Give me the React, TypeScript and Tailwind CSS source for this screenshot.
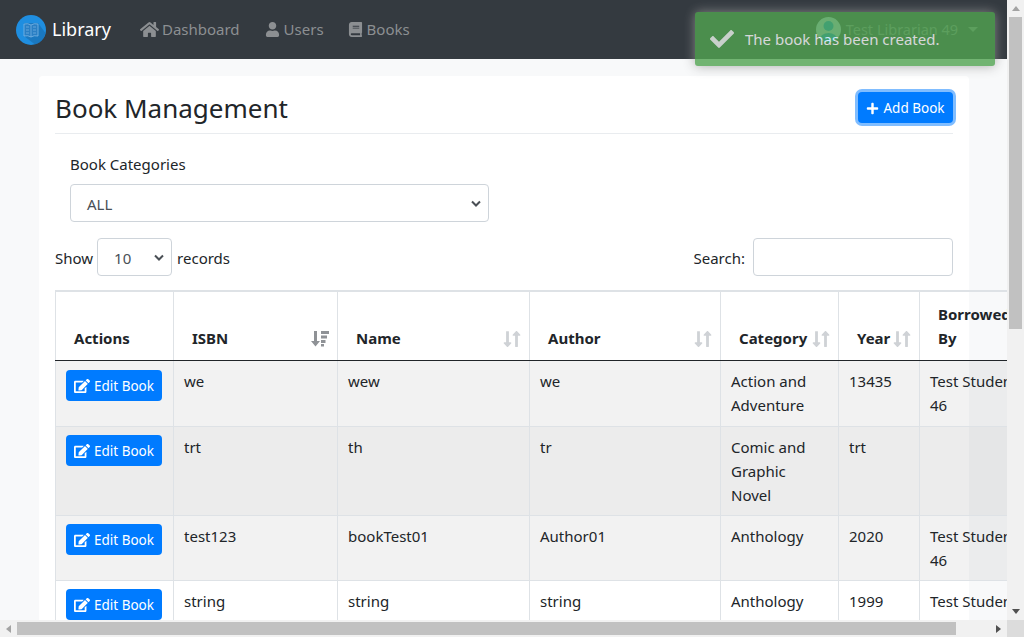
import { FaBook, FaCheck, FaEdit, FaHome, FaLongArrowAltDown, FaLongArrowAltUp, FaPlus, FaUser } from 'react-icons/fa';

const rows = [
  { isbn: 'we', name: 'wew', author: 'we', category: 'Action and Adventure', year: '13435', by: 'Test Student 46', h: 'h-[66px]', bg: 'bg-black/5', btn: 'pt-[9px]' },
  { isbn: 'trt', name: 'th', author: 'tr', category: 'Comic and Graphic Novel', year: 'trt', by: '', h: 'h-[89px]', bg: 'bg-black/[0.075]', btn: 'pt-[8px]' },
  { isbn: 'test123', name: 'bookTest01', author: 'Author01', category: 'Anthology', year: '2020', by: 'Test Student 46', h: 'h-[65px]', bg: 'bg-black/5', btn: 'pt-[8px]' },
  { isbn: 'string', name: 'string', author: 'string', category: 'Anthology', year: '1999', by: 'Test Student 46', h: 'h-[65px]', bg: '', btn: 'pt-[8px]' },
];

function SortIcon() {
  return (
    <span className="flex text-[#cfd2d6]">
      <FaLongArrowAltDown className="h-[18px] w-[9px]" />
      <FaLongArrowAltUp className="h-[18px] w-[9px]" />
    </span>
  );
}

function SortedIcon() {
  return (
    <svg width="18" height="17" viewBox="0 0 18 17" fill="#8f9296">
      <path d="M3 1 H6 V11 H9 L4.5 16.5 L0 11 H3 Z" />
      <rect x="10" y="1" width="8" height="3" />
      <rect x="10" y="5.5" width="6" height="3" />
      <rect x="10" y="10" width="4.5" height="3" />
      <rect x="10" y="14" width="3" height="2.5" />
    </svg>
  );
}

function Head({ label, sort, active }: { label: string; sort?: boolean; active?: boolean }) {
  return (
    <th className="border-x border-b border-[#dee2e6] border-b-[#212529] px-[18px] pb-[10px] align-bottom text-left font-bold">
      <div className="flex items-end justify-between leading-6">
        <span>{label}</span>
        {active && <span className="mb-[3px] -mr-[10px]"><SortedIcon /></span>}
        {sort && <span className="mb-[2px] -mr-[10px]"><SortIcon /></span>}
      </div>
    </th>
  );
}

function Scrollbars() {
  return (
    <>
      <div className="absolute right-0 top-0 flex h-[620px] w-[17px] flex-col items-center bg-[#f1f1f1]">
        <div className="mt-[6px] h-0 w-0 border-x-[4px] border-b-[5px] border-x-transparent border-b-[#a3a3a3]" />
        <div className="mt-[6px] h-[312px] w-[13px] bg-[#c1c1c1]" />
        <div className="mt-auto mb-[6px] h-0 w-0 border-x-[4px] border-t-[5px] border-x-transparent border-t-[#505050]" />
      </div>
      <div className="absolute bottom-0 left-0 flex h-[17px] w-[1024px] items-center bg-[#f1f1f1]">
        <div className="ml-[6px] h-0 w-0 border-y-[4px] border-r-[5px] border-y-transparent border-r-[#a3a3a3]" />
        <div className="ml-[6px] h-[13px] w-[939px] bg-[#c1c1c1]" />
        <div className="ml-[40px] h-0 w-0 border-y-[4px] border-l-[5px] border-y-transparent border-l-[#505050]" />
        <div className="ml-auto h-full w-[17px] bg-[#dcdcdc]" />
      </div>
    </>
  );
}

export default function App() {
  return (
    <div className="relative h-[637px] w-[1024px] overflow-hidden bg-[#f8f9fa] font-['Noto_Sans',sans-serif] text-[15px] text-[#212529]">
      <nav className="flex h-[59px] items-center bg-[#343a40] pl-4 text-[#8c8f92]">
        <div className="flex items-center gap-[6px] text-[18px] text-white">
          <svg width="30" height="30" viewBox="0 0 30 30">
            <circle cx="15" cy="15" r="15" fill="#1f8ee0" />
            <path d="M8 8 L22 8 L29.5 18 A15 15 0 0 1 19 29.5 L8 21 Z" fill="#1769aa" opacity="0.6" />
            <path d="M8 9 Q12 8 15 10 Q18 8 22 9 V21 Q18 20 15 22 Q12 20 8 21 Z" fill="#2a7fc4" stroke="#7db8e6" strokeWidth="0.8" />
            <path d="M15 10 V22 M10 12 H13 M10 15 H13 M10 18 H13 M17 12 H20 M17 15 H20 M17 18 H20" stroke="#7db8e6" strokeWidth="0.7" />
          </svg>
          <span>Library</span>
        </div>
        <div className="ml-[29px] flex items-center gap-[25px]">
          <span className="flex items-center gap-[3px]"><FaHome className="text-[19px]" />Dashboard</span>
          <span className="flex items-center gap-1"><FaUser className="text-[15px]" />Users</span>
          <span className="-ml-[1px] flex items-center gap-1"><FaBook className="text-[15px]" />Books</span>
        </div>
        <div className="ml-[406px] flex items-center gap-[5px] text-[14.5px] text-[#8c8f92]">
          <svg width="25" height="25" viewBox="0 0 25 25">
            <clipPath id="avatar"><circle cx="12.5" cy="12.5" r="12.5" /></clipPath>
            <g clipPath="url(#avatar)">
              <rect width="25" height="25" fill="#d0dcf8" />
              <circle cx="12.5" cy="9" r="5" fill="#0a96f0" />
              <ellipse cx="12.5" cy="23" rx="9" ry="7" fill="#0a96f0" />
            </g>
          </svg>
          <span>Test Librarian 49</span>
          <span className="ml-[5px] h-0 w-0 border-x-[5px] border-t-[5px] border-x-transparent border-t-[#8c8f92]" />
        </div>
      </nav>

      <main className="ml-[39px] mt-[17px] w-[930px] rounded bg-white px-4 pt-[12px] pb-10">
        <div className="flex h-[46px] items-center justify-between border-b border-[#e9ecef] pb-[3px]">
          <h1 className="-mt-[2px] text-[26px] font-normal leading-[42px]">Book Management</h1>
          <button className="-mt-[3px] flex h-[31px] w-[95px] items-center justify-center gap-1 rounded bg-[#007bff] pt-[1px] text-[13.5px] text-white ring-[3px] ring-[#80bdff]">
            <FaPlus className="text-[13px]" />Add Book
          </button>
        </div>

        <div className="ml-[15px] mt-[18px] w-[419px]">
          <label className="block leading-6">Book Categories</label>
          <div className="mt-[8px] flex h-[38px] items-center justify-between rounded border border-[#ced4da] pl-4 pr-[7px] text-[#495057]">
            <span className="pt-[2px]">ALL</span>
            <Chevron />
          </div>
        </div>

        <div className="mt-4 flex items-center justify-between text-[#212529]">
          <div className="flex items-center gap-[4px]">
            <span className="pt-[2px]">Show</span>
            <div className="flex h-[38px] w-[75px] items-center justify-between rounded border border-[#ced4da] pl-4 pr-[7px] text-[#495057]">
              <span className="pt-[2px]">10</span>
              <Chevron />
            </div>
            <span className="pl-[1px] pt-[2px]">records</span>
          </div>
          <div className="flex items-center gap-2">
            <span className="pt-[2px]">Search:</span>
            <div className="h-[38px] w-[200px] rounded border border-[#ced4da]" />
          </div>
        </div>

        <table className="mt-[14px] w-[989px] table-fixed border-t-2 border-[#dee2e6]">
          <colgroup>
            <col className="w-[118px]" />
            <col className="w-[164px]" />
            <col className="w-[192px]" />
            <col className="w-[191px]" />
            <col className="w-[118px]" />
            <col className="w-[81px]" />
            <col className="w-[125px]" />
          </colgroup>
          <thead>
            <tr className="h-[69px]">
              <Head label="Actions" />
              <Head label="ISBN" active />
              <Head label="Name" sort />
              <Head label="Author" sort />
              <Head label="Category" sort />
              <Head label="Year" sort />
              <th className="border-x border-b border-[#dee2e6] border-b-[#212529] px-[18px] pb-[10px] text-left align-bottom font-bold leading-6">Borrowed By</th>
            </tr>
          </thead>
          <tbody>
            {rows.map((r) => (
              <tr key={r.isbn} className={`${r.h} ${r.bg} border-b border-[#dee2e6] align-top leading-6`}>
                <td className={`border-x border-[#dee2e6] px-[10px] ${r.btn}`}>
                  <button className="flex h-[31px] w-[96px] items-center justify-center gap-1 rounded bg-[#007bff] pt-[1px] text-[13.5px] text-white">
                    <FaEdit className="text-[16px]" />Edit Book
                  </button>
                </td>
                <td className="border-x border-[#dee2e6] px-[10px] pt-[8px]">{r.isbn}</td>
                <td className="border-x border-[#dee2e6] px-[10px] pt-[8px]">{r.name}</td>
                <td className="border-x border-[#dee2e6] px-[10px] pt-[8px]">{r.author}</td>
                <td className="border-x border-[#dee2e6] px-[10px] pt-[8px]">{r.category}</td>
                <td className="border-x border-[#dee2e6] px-[10px] pt-[8px]">{r.year}</td>
                <td className="border-x border-[#dee2e6] px-[10px] pt-[8px]">{r.by}</td>
              </tr>
            ))}
          </tbody>
        </table>
      </main>

      <div className="absolute left-[695px] top-[12px] flex h-[54px] w-[300px] items-center rounded-[3px] bg-[#51a351] pl-[15px] text-white opacity-80 shadow-[0_0_12px_#999]">
        <FaCheck className="text-[24px] opacity-90" />
        <span className="ml-[11px]">The book has been created.</span>
      </div>

      <Scrollbars />
    </div>
  );
}

function Chevron() {
  return (
    <svg width="10" height="7" viewBox="0 0 10 7">
      <path d="M1 1.5 L5 5.5 L9 1.5" fill="none" stroke="#4a4f55" strokeWidth="2" />
    </svg>
  );
}
